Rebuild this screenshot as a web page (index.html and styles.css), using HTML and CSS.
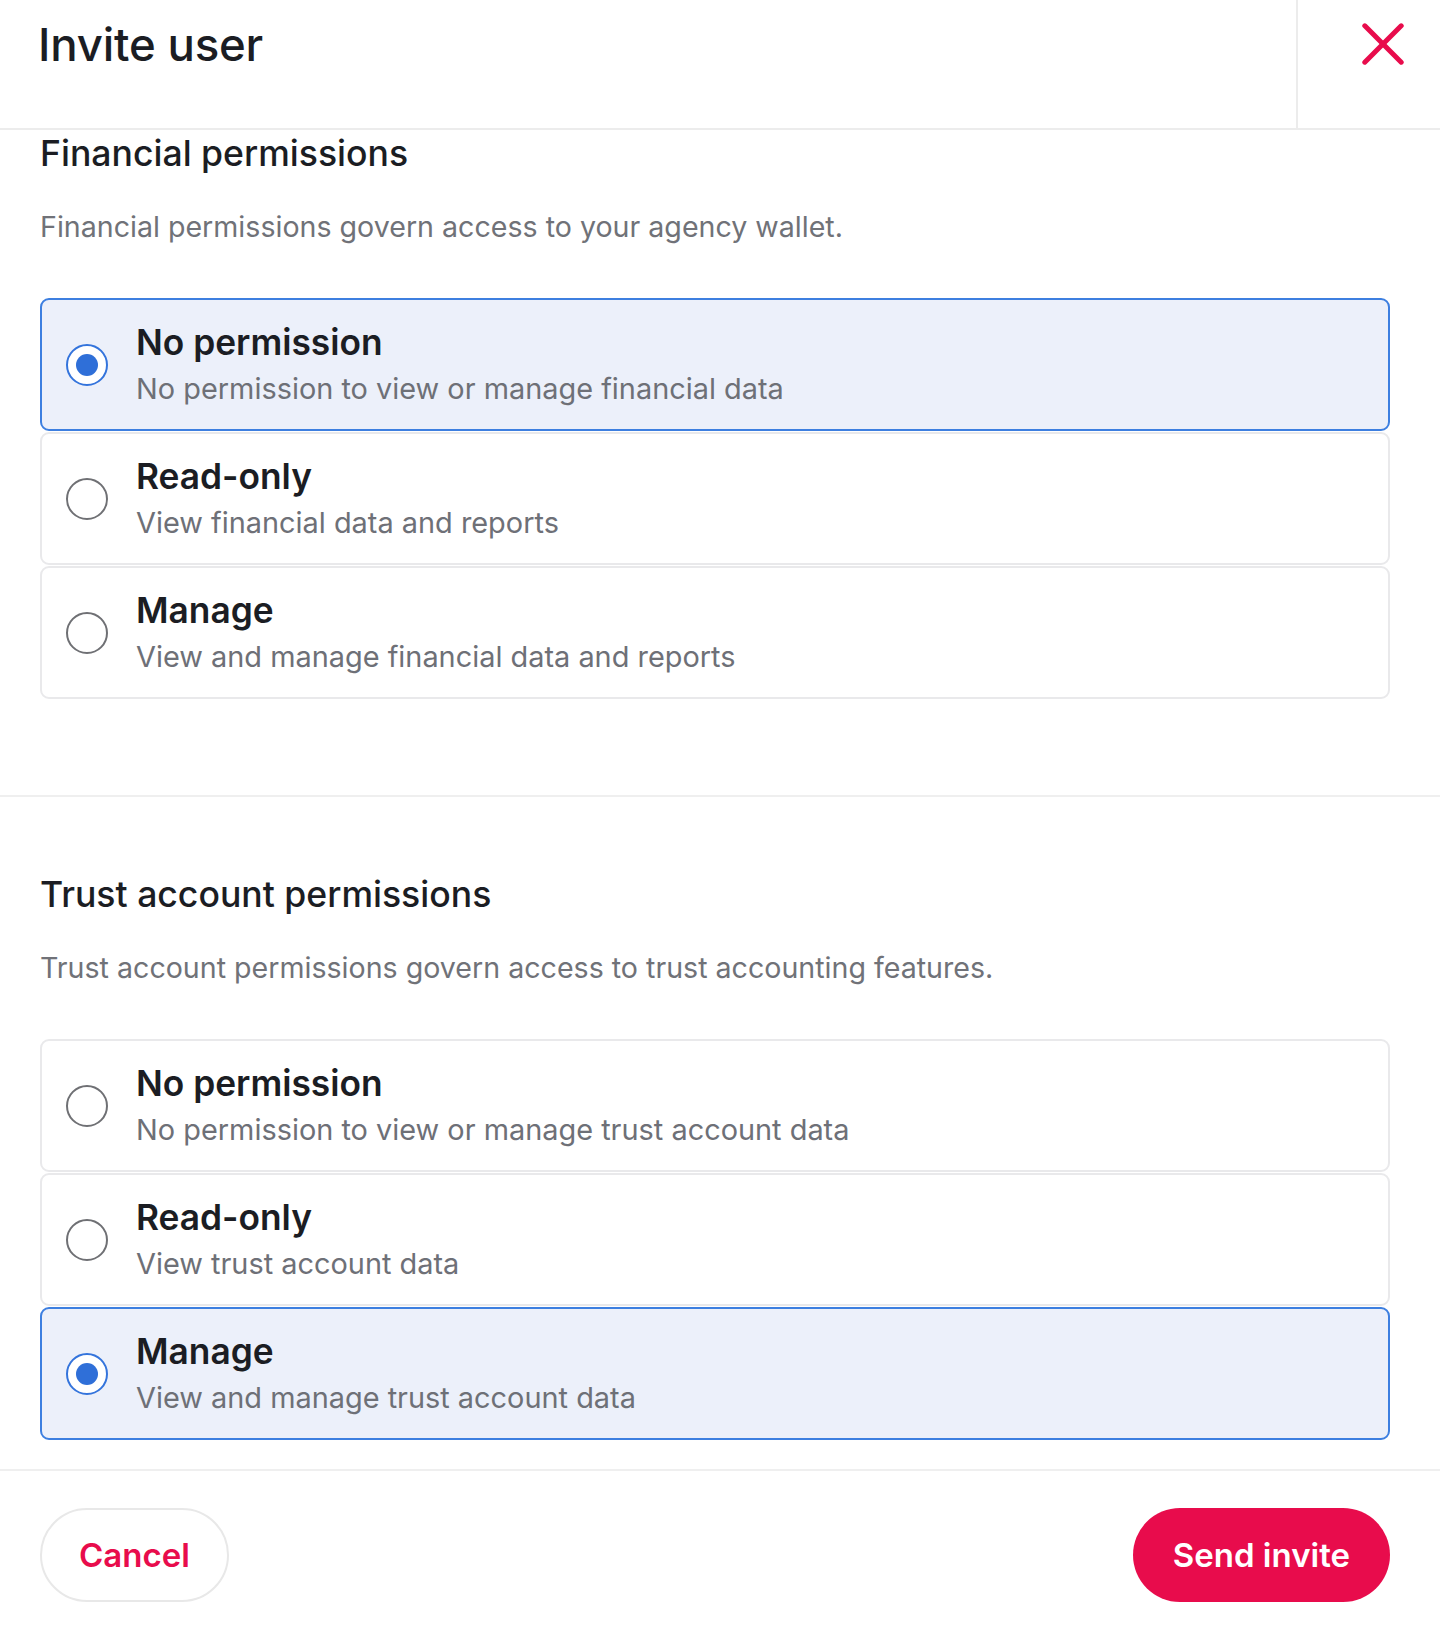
FILE: index.html
```html
<!DOCTYPE html>
<html lang="en">
<head>
<meta charset="utf-8">
<title>Invite user</title>
<link rel="stylesheet" href="styles.css">
</head>
<body>
<div class="modal">
  <header class="modal-header">
    <div class="modal-title-wrap">
      <h1 class="modal-title">Invite user</h1>
    </div>
    <div class="modal-close-col">
      <button class="close-btn" aria-label="Close">
        <svg width="42" height="42" viewBox="0 0 42 42" aria-hidden="true">
          <line x1="2.8" y1="2.8" x2="39.2" y2="39.2" />
          <line x1="39.2" y1="2.8" x2="2.8" y2="39.2" />
        </svg>
      </button>
    </div>
  </header>

  <section class="perm-section perm-section-first">
    <h2 class="section-heading">Financial permissions</h2>
    <p class="section-desc">Financial permissions govern access to your agency wallet.</p>
    <div class="options">
      <label class="option option-selected">
        <span class="radio radio-on"></span>
        <span class="option-text">
          <span class="option-title">No permission</span>
          <span class="option-desc">No permission to view or manage financial data</span>
        </span>
      </label>
      <label class="option">
        <span class="radio"></span>
        <span class="option-text">
          <span class="option-title">Read-only</span>
          <span class="option-desc">View financial data and reports</span>
        </span>
      </label>
      <label class="option">
        <span class="radio"></span>
        <span class="option-text">
          <span class="option-title">Manage</span>
          <span class="option-desc">View and manage financial data and reports</span>
        </span>
      </label>
    </div>
  </section>

  <section class="perm-section perm-section-second">
    <h2 class="section-heading">Trust account permissions</h2>
    <p class="section-desc">Trust account permissions govern access to trust accounting features.</p>
    <div class="options">
      <label class="option">
        <span class="radio"></span>
        <span class="option-text">
          <span class="option-title">No permission</span>
          <span class="option-desc">No permission to view or manage trust account data</span>
        </span>
      </label>
      <label class="option">
        <span class="radio"></span>
        <span class="option-text">
          <span class="option-title">Read-only</span>
          <span class="option-desc">View trust account data</span>
        </span>
      </label>
      <label class="option option-selected">
        <span class="radio radio-on"></span>
        <span class="option-text">
          <span class="option-title">Manage</span>
          <span class="option-desc">View and manage trust account data</span>
        </span>
      </label>
    </div>
  </section>

  <footer class="modal-footer">
    <button class="btn btn-cancel">Cancel</button>
    <button class="btn btn-primary">Send invite</button>
  </footer>
</div>
</body>
</html>
```

FILE: styles.css
```css
html, body {
  margin: 0;
  padding: 0;
  background: #ffffff;
}

body {
  width: 1440px;
  height: 1625px;
  overflow: hidden;
  font-family: Inter, "Noto Sans", "Liberation Sans", sans-serif;
  color: #1b1d23;
}

.modal {
  display: flex;
  flex-direction: column;
}

/* Header */
.modal-header {
  display: flex;
  height: 128px;
  border-bottom: 2px solid #ececec;
}

.modal-title-wrap {
  flex: 1;
  height: 90px;
  display: flex;
  align-items: center;
  padding-left: 38px;
}

.modal-title {
  margin: 0;
  font-size: 45.6px;
  font-weight: 500;
  line-height: 1.2;
  letter-spacing: -0.2px;
  color: #1b1d23;
}

.modal-close-col {
  width: 144px;
  border-left: 2px solid #ececec;
  display: flex;
  justify-content: flex-end;
  align-items: flex-start;
  padding-right: 36px;
  box-sizing: border-box;
}

.close-btn {
  margin-top: 23px;
  width: 42px;
  height: 42px;
  padding: 0;
  border: 0;
  background: none;
  display: flex;
}

.close-btn line {
  stroke: #e80c4c;
  stroke-width: 5;
  stroke-linecap: round;
}

/* Sections */
.perm-section {
  padding-left: 40px;
  padding-right: 50px;
}

.perm-section-first {
  padding-top: 4px;
  padding-bottom: 96px;
  border-bottom: 2px solid #efefef;
}

.perm-section-second {
  padding-top: 78px;
  padding-bottom: 29px;
  border-bottom: 2px solid #efefef;
}

.section-heading {
  margin: 0;
  font-size: 35.6px;
  font-weight: 500;
  line-height: 40px;
  color: #1b1d23;
}

.section-desc {
  margin: 33px 0 0;
  font-size: 28.6px;
  font-weight: 400;
  line-height: 40px;
  color: #707278;
}

.options {
  margin-top: 51px;
  display: flex;
  flex-direction: column;
  gap: 1px;
}

.option {
  height: 133px;
  box-sizing: border-box;
  border: 2px solid #e9e9eb;
  border-radius: 9px;
  background: #ffffff;
  display: flex;
  align-items: center;
  padding-left: 24px;
  gap: 28px;
}

.option-selected {
  background: #ecf0fa;
  border-color: #3d7fe0;
}

.radio {
  width: 42px;
  height: 42px;
  box-sizing: border-box;
  border: 2px solid #6f7074;
  border-radius: 50%;
  flex: none;
  display: flex;
  align-items: center;
  justify-content: center;
  background: #ffffff;
}

.radio-on {
  border: 2.5px solid #3474dc;
}

.radio-on::after {
  content: "";
  width: 22px;
  height: 22px;
  border-radius: 50%;
  background: #2f6fd8;
}

.option-text {
  display: flex;
  flex-direction: column;
  gap: 4px;
}

.option-title {
  font-size: 35.3px;
  font-weight: 600;
  line-height: 44px;
  color: #1b1d23;
}

.option-desc {
  font-size: 28.9px;
  font-weight: 400;
  line-height: 40px;
  color: #6e7077;
}

/* Footer */
.modal-footer {
  display: flex;
  justify-content: space-between;
  align-items: center;
  padding: 37px 50px 0 40px;
}

.btn {
  height: 94px;
  border-radius: 47px;
  font-family: Inter, "Noto Sans", "Liberation Sans", sans-serif;
  font-size: 33px;
  font-weight: 600;
  padding: 0 37px;
  cursor: pointer;
}

.btn-cancel {
  background: #ffffff;
  border: 2px solid #e8e8e8;
  color: #e80c4c;
}

.btn-primary {
  background: #e80c4c;
  border: 0;
  color: #ffffff;
  padding: 0 40px;
}
```
